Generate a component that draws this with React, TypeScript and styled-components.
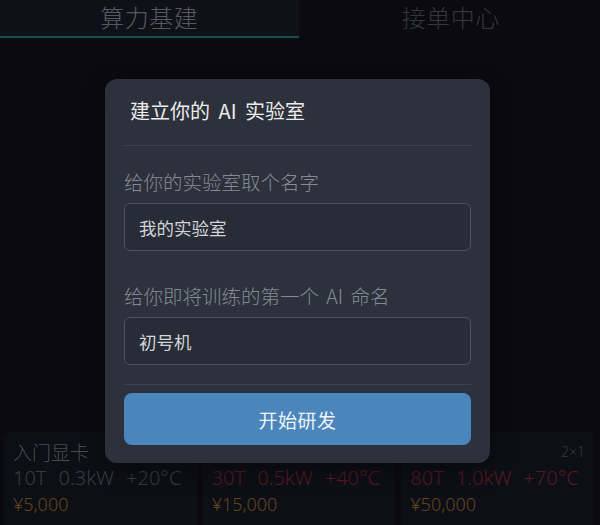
import React from "react";
import styled, { createGlobalStyle } from "styled-components";

const Global = createGlobalStyle`
  html, body { margin: 0; padding: 0; background: #11121b; }
  body { font-family: "Noto Sans", "Noto Sans CJK SC", sans-serif; }
  * { box-sizing: border-box; }
`;

const Page = styled.div`
  position: relative;
  width: 600px;
  height: 525px;
  overflow: hidden;
  background: #11121b;
  display: flex;
  flex-direction: column;
`;

const TabBar = styled.div`
  display: flex;
  height: 38px;
  flex-shrink: 0;
`;

const Tab = styled.div<{ $active?: boolean }>`
  flex: 1;
  display: flex;
  align-items: center;
  justify-content: center;
  padding-bottom: 2px;
  font-family: "Noto Sans CJK SC", sans-serif;
  font-size: 24px;
  line-height: 34px;
  letter-spacing: 0.5px;
  font-weight: 300;
  color: ${(p) => (p.$active ? "#8e939e" : "#555a63")};
  background: ${(p) => (p.$active ? "#1a1d2a" : "transparent")};
  border-bottom: 2px solid ${(p) => (p.$active ? "#2c8088" : "transparent")};
  margin-right: ${(p) => (p.$active ? "3px" : "0")};
`;

const Main = styled.div`
  flex: 1;
  padding: 394px 6px 0 4px;
`;

const CardGrid = styled.div`
  display: grid;
  grid-template-columns: repeat(3, 1fr);
  gap: 6px;
`;

const Card = styled.div`
  background: #171925;
  border-radius: 6px;
  padding: 6px 9px 12px;
  height: 110px;
`;

const CardHead = styled.div`
  display: flex;
  justify-content: space-between;
  align-items: center;
  height: 26px;
`;

const CardTitle = styled.div`
  font-family: "Noto Sans CJK SC", sans-serif;
  font-size: 19px;
  font-weight: 300;
  color: #7a7d86;
`;

const SizeTag = styled.div`
  font-size: 14px;
  font-weight: 300;
  color: #5a5d64;
`;

const Specs = styled.div<{ $tone: "grey" | "red" }>`
  display: flex;
  gap: 12px;
  font-size: 20px;
  line-height: 28px;
  white-space: nowrap;
  color: ${(p) => (p.$tone === "red" ? "#8e2a34" : "#5e6269")};
  font-weight: 300;
`;

const Price = styled.div`
  font-size: 18px;
  line-height: 24px;
  color: #a3712f;
  font-weight: 300;
`;

const Overlay = styled.div`
  position: absolute;
  inset: 0;
  background: rgba(0, 0, 0, 0.4);
  display: flex;
  justify-content: center;
  align-items: flex-start;
  padding: 79px 5px 0 0;
`;

const Dialog = styled.div`
  width: 385px;
  height: 384px;
  background: #2d313c;
  border-radius: 12px;
  padding: 18px 19px 17px;
  display: flex;
  flex-direction: column;
  font-family: "Noto Sans CJK SC", sans-serif;
  box-shadow: 0 6px 24px rgba(0, 0, 0, 0.4);
`;

const Title = styled.h2`
  margin: 0 0 20px;
  padding-left: 6px;
  font-size: 20px;
  line-height: 28px;
  font-weight: 400;
  word-spacing: 4px;
  color: #ececec;
`;

const Divider = styled.div<{ $gap: number }>`
  height: 1px;
  background: #3e4250;
  margin-bottom: ${(p) => p.$gap}px;
`;

const Label = styled.label`
  display: block;
  font-size: 19.5px;
  line-height: 26px;
  font-weight: 300;
  word-spacing: 3px;
  color: #858a94;
  margin-bottom: 8px;
`;

const Field = styled.div<{ $after: number }>`
  margin-bottom: ${(p) => p.$after}px;
`;

const Input = styled.input`
  display: block;
  width: 100%;
  height: 48px;
  border: 1.5px solid #4d525d;
  border-radius: 6px;
  background: #282c36;
  padding: 0 14px;
  font-family: "Noto Sans CJK SC", sans-serif;
  font-size: 17.5px;
  color: #d2d4d8;
  outline: none;
`;

const Button = styled.button`
  height: 52px;
  border: none;
  border-radius: 8px;
  background: #4a86bb;
  color: #f0f4f8;
  font-family: "Noto Sans CJK SC", sans-serif;
  font-size: 19px;
  letter-spacing: 0.5px;
`;

const cards = [
  { title: "入门显卡", size: "", specs: ["10T", "0.3kW", "+20°C"], tone: "grey" as const, price: "¥5,000" },
  { title: "进阶显卡", size: "", specs: ["30T", "0.5kW", "+40°C"], tone: "red" as const, price: "¥15,000" },
  { title: "专业显卡", size: "2×1", specs: ["80T", "1.0kW", "+70°C"], tone: "red" as const, price: "¥50,000" },
];

export default function App() {
  return (
    <Page>
      <Global />
      <TabBar>
        <Tab $active>算力基建</Tab>
        <Tab>接单中心</Tab>
      </TabBar>
      <Main>
        <CardGrid>
          {cards.map((c) => (
            <Card key={c.title}>
              <CardHead>
                <CardTitle>{c.title}</CardTitle>
                <SizeTag>{c.size}</SizeTag>
              </CardHead>
              <Specs $tone={c.tone}>
                {c.specs.map((s) => (
                  <span key={s}>{s}</span>
                ))}
              </Specs>
              <Price>{c.price}</Price>
            </Card>
          ))}
        </CardGrid>
      </Main>
      <Overlay>
        <Dialog>
          <Title>建立你的 AI 实验室</Title>
          <Divider $gap={23} />
          <Field $after={32}>
            <Label>给你的实验室取个名字</Label>
            <Input defaultValue="我的实验室" />
          </Field>
          <Field $after={19}>
            <Label>给你即将训练的第一个 AI 命名</Label>
            <Input defaultValue="初号机" />
          </Field>
          <Divider $gap={8} />
          <Button>开始研发</Button>
        </Dialog>
      </Overlay>
    </Page>
  );
}
